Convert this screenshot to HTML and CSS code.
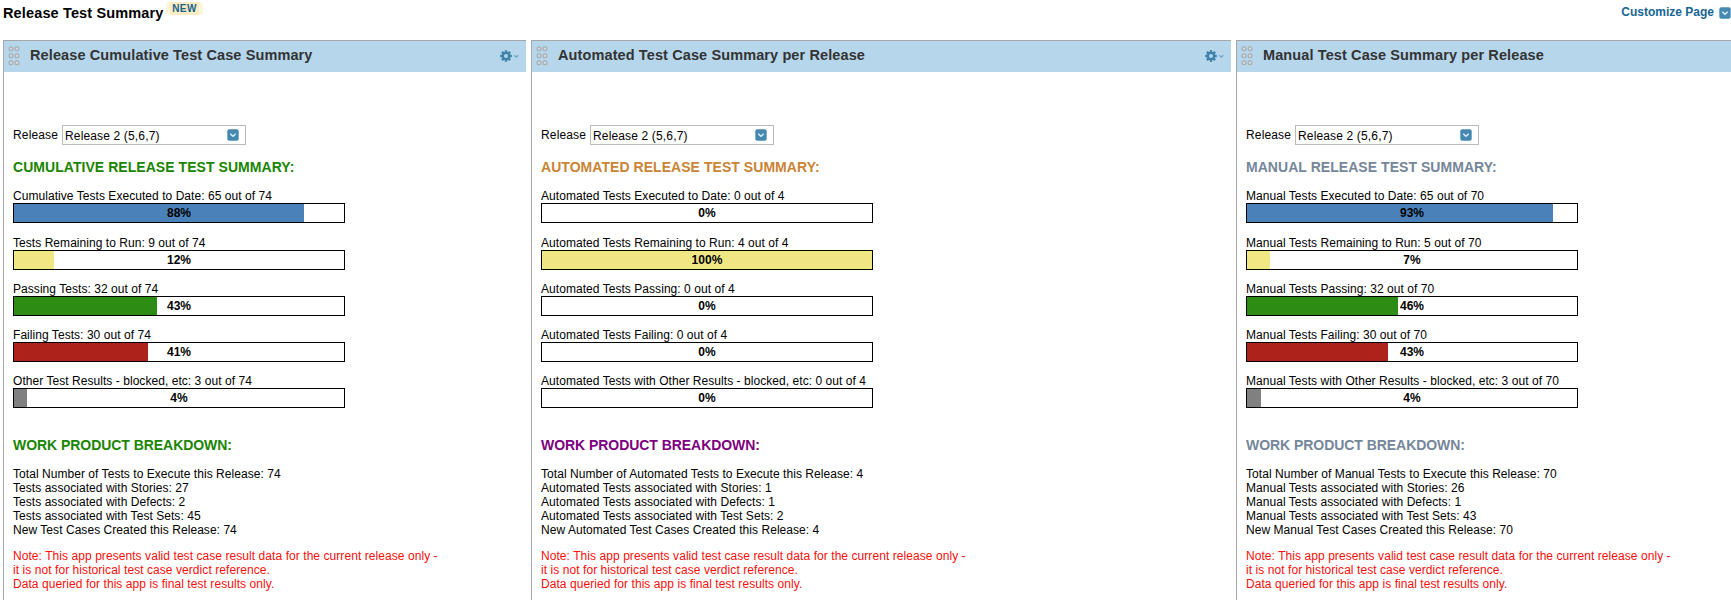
FILE: index.html
```html
<!DOCTYPE html>
<html lang="en">
<head>
<meta charset="utf-8">
<title>Release Test Summary</title>
<link rel="stylesheet" href="styles.css">
</head>
<body>
<svg class="defs" width="0" height="0">
  <symbol id="grip" viewBox="0 0 12 20">
    <g fill="#cfdce5" stroke="#a9adb0" stroke-width="1.2">
      <circle cx="3" cy="2.7" r="1.9"/><circle cx="9" cy="2.7" r="1.9"/>
      <circle cx="3" cy="9.7" r="1.9"/><circle cx="9" cy="9.7" r="1.9"/>
      <circle cx="3" cy="16.7" r="1.9"/><circle cx="9" cy="16.7" r="1.9"/>
    </g>
  </symbol>
  <symbol id="gear" viewBox="0 0 20 12">
    <g stroke="#3f81aa" stroke-width="2.4">
      <path d="M6 0.2V11.8M0.2 6H11.8M1.9 1.9L10.1 10.1M10.1 1.9L1.9 10.1"/>
    </g>
    <circle cx="6" cy="6" r="4.2" fill="#3f81aa"/>
    <circle cx="6" cy="6" r="2" fill="#b6d6eb"/>
    <path d="M14.3 5.3L16.3 7.2L18.3 5.3" fill="none" stroke="#6fa3c3" stroke-width="1.2"/>
  </symbol>
  <symbol id="drop" viewBox="0 0 12 12">
    <rect x="0.3" y="0.3" width="11.4" height="11.4" rx="2" fill="#4589b1"/>
    <path d="M3.3 4.7L6 7.3L8.7 4.7" fill="none" stroke="#e4f1f8" stroke-width="1.3"/>
  </symbol>
</svg>
<header class="topbar">
  <h1 class="page-title">Release Test Summary</h1>
  <span class="badge">NEW</span>
  <a class="customize">Customize Page</a>
  <svg class="drop-icon"><use href="#drop"/></svg>
</header>
<main class="panels">
  <section class="panel">
    <header class="panel-head">
      <svg class="grip"><use href="#grip"/></svg>
      <h2 class="panel-title">Release Cumulative Test Case Summary</h2>
      <svg class="gear"><use href="#gear"/></svg>
    </header>
    <div class="panel-body">
      <div class="picker"><span class="picker-label">Release</span><div class="select"><span>Release 2 (5,6,7)</span><svg class="drop-icon"><use href="#drop"/></svg></div></div>
      <h3 class="heading green">CUMULATIVE RELEASE TEST SUMMARY:</h3>
      <div class="bars">
        <div class="item first"><div>Cumulative Tests Executed to Date: 65 out of 74</div><div class="bar"><div class="fill blue" style="width:87.84%"></div><b class="pct">88%</b></div></div>
        <div class="item"><div>Tests Remaining to Run: 9 out of 74</div><div class="bar"><div class="fill yellow" style="width:12.16%"></div><b class="pct">12%</b></div></div>
        <div class="item"><div>Passing Tests: 32 out of 74</div><div class="bar"><div class="fill pass" style="width:43.24%"></div><b class="pct">43%</b></div></div>
        <div class="item"><div>Failing Tests: 30 out of 74</div><div class="bar"><div class="fill red" style="width:40.54%"></div><b class="pct">41%</b></div></div>
        <div class="item"><div>Other Test Results - blocked, etc: 3 out of 74</div><div class="bar"><div class="fill gray" style="width:4.05%"></div><b class="pct">4%</b></div></div>
      </div>
      <h3 class="heading green">WORK PRODUCT BREAKDOWN:</h3>
      <div class="breakdown">
        <div>Total Number of Tests to Execute this Release: 74</div>
        <div>Tests associated with Stories: 27</div>
        <div>Tests associated with Defects: 2</div>
        <div>Tests associated with Test Sets: 45</div>
        <div>New Test Cases Created this Release: 74</div>
      </div>
      <p class="note">Note: This app presents valid test case result data for the current release only -<br>it is not for historical test case verdict reference.<br>Data queried for this app is final test results only.</p>
    </div>
  </section>
  <section class="panel">
    <header class="panel-head">
      <svg class="grip"><use href="#grip"/></svg>
      <h2 class="panel-title">Automated Test Case Summary per Release</h2>
      <svg class="gear"><use href="#gear"/></svg>
    </header>
    <div class="panel-body">
      <div class="picker"><span class="picker-label">Release</span><div class="select"><span>Release 2 (5,6,7)</span><svg class="drop-icon"><use href="#drop"/></svg></div></div>
      <h3 class="heading orange">AUTOMATED RELEASE TEST SUMMARY:</h3>
      <div class="bars">
        <div class="item first"><div>Automated Tests Executed to Date: 0 out of 4</div><div class="bar"><b class="pct">0%</b></div></div>
        <div class="item"><div>Automated Tests Remaining to Run: 4 out of 4</div><div class="bar"><div class="fill yellow" style="width:100%"></div><b class="pct">100%</b></div></div>
        <div class="item"><div>Automated Tests Passing: 0 out of 4</div><div class="bar"><b class="pct">0%</b></div></div>
        <div class="item"><div>Automated Tests Failing: 0 out of 4</div><div class="bar"><b class="pct">0%</b></div></div>
        <div class="item"><div>Automated Tests with Other Results - blocked, etc: 0 out of 4</div><div class="bar"><b class="pct">0%</b></div></div>
      </div>
      <h3 class="heading purple">WORK PRODUCT BREAKDOWN:</h3>
      <div class="breakdown">
        <div>Total Number of Automated Tests to Execute this Release: 4</div>
        <div>Automated Tests associated with Stories: 1</div>
        <div>Automated Tests associated with Defects: 1</div>
        <div>Automated Tests associated with Test Sets: 2</div>
        <div>New Automated Test Cases Created this Release: 4</div>
      </div>
      <p class="note">Note: This app presents valid test case result data for the current release only -<br>it is not for historical test case verdict reference.<br>Data queried for this app is final test results only.</p>
    </div>
  </section>
  <section class="panel">
    <header class="panel-head">
      <svg class="grip"><use href="#grip"/></svg>
      <h2 class="panel-title">Manual Test Case Summary per Release</h2>
    </header>
    <div class="panel-body">
      <div class="picker"><span class="picker-label">Release</span><div class="select"><span>Release 2 (5,6,7)</span><svg class="drop-icon"><use href="#drop"/></svg></div></div>
      <h3 class="heading slate">MANUAL RELEASE TEST SUMMARY:</h3>
      <div class="bars">
        <div class="item first"><div>Manual Tests Executed to Date: 65 out of 70</div><div class="bar"><div class="fill blue" style="width:92.86%"></div><b class="pct">93%</b></div></div>
        <div class="item"><div>Manual Tests Remaining to Run: 5 out of 70</div><div class="bar"><div class="fill yellow" style="width:7%"></div><b class="pct">7%</b></div></div>
        <div class="item"><div>Manual Tests Passing: 32 out of 70</div><div class="bar"><div class="fill pass" style="width:45.71%"></div><b class="pct">46%</b></div></div>
        <div class="item"><div>Manual Tests Failing: 30 out of 70</div><div class="bar"><div class="fill red" style="width:42.86%"></div><b class="pct">43%</b></div></div>
        <div class="item"><div>Manual Tests with Other Results - blocked, etc: 3 out of 70</div><div class="bar"><div class="fill gray" style="width:4.29%"></div><b class="pct">4%</b></div></div>
      </div>
      <h3 class="heading slate">WORK PRODUCT BREAKDOWN:</h3>
      <div class="breakdown">
        <div>Total Number of Manual Tests to Execute this Release: 70</div>
        <div>Manual Tests associated with Stories: 26</div>
        <div>Manual Tests associated with Defects: 1</div>
        <div>Manual Tests associated with Test Sets: 43</div>
        <div>New Manual Test Cases Created this Release: 70</div>
      </div>
      <p class="note">Note: This app presents valid test case result data for the current release only -<br>it is not for historical test case verdict reference.<br>Data queried for this app is final test results only.</p>
    </div>
  </section>
</main>
</body>
</html>
```
FILE: styles.css
```css
* { box-sizing: border-box; }
body {
  margin: 0;
  height: 600px;
  overflow: hidden;
  display: flex;
  flex-direction: column;
  background: #fff;
  color: #000;
  font: 12px/14px "Liberation Sans", Arial, sans-serif;
}
h1, h2, h3, p { margin: 0; }
.defs { display: none; }

.topbar {
  height: 40px;
  flex: none;
  display: flex;
  align-items: flex-start;
  padding-left: 3px;
}
.page-title { margin-top: 4px; width: 163px; font-size: 14.5px; line-height: 18px; letter-spacing: 0.14px; white-space: nowrap; }
.badge {
  width: 37px;
  height: 13px;
  margin-top: 2px;
  border: solid #fdf5dc;
  border-width: 0 4px;
  border-radius: 3px;
  background: #fdecc2;
  color: #17628f;
  font-size: 10px;
  font-weight: bold;
  line-height: 14px;
  letter-spacing: 0.4px;
  text-align: center;
}
.customize { margin: 5px 5px 0 auto; color: #156696; font-weight: bold; line-height: 15px; }
.drop-icon { width: 12px; height: 12px; flex: none; }
.topbar .drop-icon { margin-top: 7px; }

.panels {
  flex: 1;
  display: grid;
  grid-template-columns: 523px 700px minmax(0, 1fr);
  column-gap: 5px;
  padding-left: 3px;
}
.panel { border: solid #a6a6a6; border-width: 1px 0 0 1px; }
.panel-head {
  height: 31px;
  display: flex;
  align-items: flex-start;
  padding-right: 6px;
  padding-left: 4px;
  background: #b6d6eb;
}
.grip { width: 12px; height: 20px; margin: 5px 10px 0 0; }
.panel-title { margin-top: 5px; color: #333; font-size: 14.5px; line-height: 18px; letter-spacing: 0.11px; white-space: nowrap; }
.gear { width: 20px; height: 12px; margin: 9px 0 0 auto; }

.panel-body { padding: 53px 0 0 9px; letter-spacing: 0.05px; }
.picker { display: flex; height: 20px; letter-spacing: 0.15px; }
.picker-label { width: 49px; padding-top: 3px; }
.select {
  width: 184px;
  display: flex;
  justify-content: space-between;
  padding: 3px 6px 0 2px;
  border: 1px solid #bbb;
}
.heading { font-size: 14px; line-height: 16px; margin-top: 14px; letter-spacing: 0.05px; white-space: nowrap; }
.bars { display: flex; flex-direction: column; gap: 12px; padding-top: 14px; margin-bottom: 29px; }
.item.first { margin-bottom: 1px; }
.bar {
  display: grid;
  width: 332px;
  height: 20px;
  border: 1px solid #000;
}
.fill, .pct { grid-area: 1 / 1; }
.pct { padding-top: 2px; text-align: center; }
.blue { background: #4a81b8; }
.yellow { background: #f0e784; }
.pass { background: #2d8c13; }
.red { background: #ae221c; }
.gray { background: #808080; }
.heading.green { color: #198500; }
.heading.orange { color: #ca8434; }
.heading.purple { color: #7d0080; }
.heading.slate { color: #75869a; }
.bars + .heading { margin-top: 0; letter-spacing: -0.05px; }
.breakdown { padding-top: 14px; }
.note { margin-top: 12px; color: #fb0f0c; letter-spacing: 0.065px; }
```
